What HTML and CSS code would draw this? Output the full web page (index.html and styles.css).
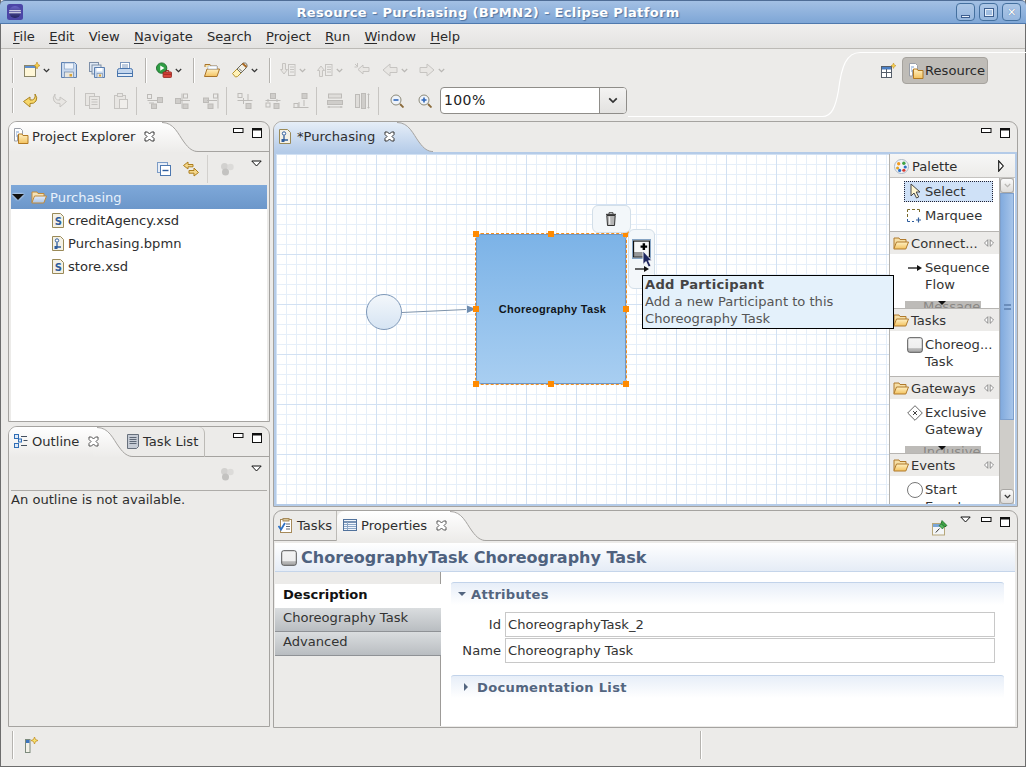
FILE: index.html
```html
<!DOCTYPE html>
<html lang="en">
<head>
<meta charset="utf-8">
<title>Resource - Purchasing (BPMN2) - Eclipse Platform</title>
<link rel="stylesheet" href="styles.css">
</head>
<body>
<svg class="defs" width="0" height="0" aria-hidden="true">
  <defs>
    <linearGradient id="gFolder" x1="0" y1="0" x2="0" y2="1"><stop offset="0" stop-color="#fff1c4"/><stop offset="1" stop-color="#f3c25f"/></linearGradient>
    <linearGradient id="gBlue" x1="0" y1="0" x2="0" y2="1"><stop offset="0" stop-color="#e6eefa"/><stop offset="1" stop-color="#a9c4e6"/></linearGradient>
    <linearGradient id="gGlobe" x1="0" y1="0" x2="0" y2="1"><stop offset="0" stop-color="#6a66c8"/><stop offset="1" stop-color="#24235f"/></linearGradient>
    <symbol id="close" viewBox="0 0 11 11"><path d="M1 1h2.500l2 2 2-2H10v2.500l-2 2 2 2V10H7.500l-2-2-2 2H1V7.500l2-2-2-2z" fill="#fff" stroke="#333" stroke-width="1"/></symbol>
    <symbol id="closeg" viewBox="0 0 11 11"><path d="M1 1h2.500l2 2 2-2H10v2.500l-2 2 2 2V10H7.500l-2-2-2 2H1V7.500l2-2-2-2z" fill="#fff" stroke="#555" stroke-width="1"/></symbol>
    <symbol id="min" viewBox="0 0 11 6"><rect x=".5" y=".5" width="9.500" height="4" fill="#fff" stroke="#111"/></symbol>
    <symbol id="max" viewBox="0 0 10 10"><rect x=".5" y=".5" width="9" height="9" fill="#fff" stroke="#111"/><path d="M0 1.500h10" stroke="#111" stroke-width="2"/></symbol>
    <symbol id="menu" viewBox="0 0 11 7"><path d="M.8 1h9.400L5.500 6z" fill="#fff" stroke="#111"/></symbol>
    <symbol id="parrow" viewBox="0 0 6 12"><path d="M.7.800L5.300 6 .7 11.200z" fill="#fff" stroke="#111" stroke-width="1.100"/></symbol>
    <symbol id="chev" viewBox="0 0 7 5"><path d="M.8 1l2.700 2.700L6.200 1" fill="none" stroke="#333" stroke-width="1.200"/></symbol>
    <symbol id="chevg" viewBox="0 0 7 5"><path d="M.8 1l2.700 2.700L6.200 1" fill="none" stroke="#b9b7b4" stroke-width="1.200"/></symbol>
    <symbol id="new" viewBox="0 0 16 16"><rect x=".5" y="3.500" width="11" height="11" fill="#fff7d8" stroke="#8a8568"/><rect x="1" y="4" width="10" height="2" fill="#5f8fd0"/><path d="M13 0l1 2.500L16 3.500l-2 1-1 2.500-1-2.500-2-1 2-1z" fill="#f7d34c" stroke="#c08a1e" stroke-width=".6"/></symbol>
    <symbol id="save" viewBox="0 0 16 16"><path d="M.5.500h13l2 2v13H.5z" fill="#c9d9ee" stroke="#5b7fb0"/><rect x="3.500" y="1" width="9" height="6" fill="#eef3fa" stroke="#8aa5c8" stroke-width=".7"/><rect x="3.500" y="10" width="9" height="5.500" fill="#e9e6de" stroke="#6b87ad" stroke-width=".7"/><rect x="8.500" y="12" width="2.500" height="2.500" fill="#d9a437"/></symbol>
    <symbol id="saveall" viewBox="0 0 16 16"><rect x=".5" y=".5" width="9" height="9" fill="#dfe8f4" stroke="#7d8fa8"/><rect x="3" y="3" width="9" height="9" fill="#dfe8f4" stroke="#7d8fa8"/><path d="M5.500 5.500h10v10h-10z" fill="#c9d9ee" stroke="#5b7fb0"/><rect x="7.500" y="6" width="6" height="3.500" fill="#fff"/><rect x="8" y="11.500" width="5.500" height="4" fill="#e9e6de" stroke="#6b87ad" stroke-width=".6"/><rect x="10" y="12.500" width="2" height="2" fill="#d9a437"/></symbol>
    <symbol id="print" viewBox="0 0 16 16"><rect x="3.500" y=".5" width="9" height="8" fill="#fff" stroke="#7d98bd"/><path d="M5 3h6M5 5h6" stroke="#7d98bd"/><path d="M.5 8.500q0-2 2-2h11q2 0 2 2v5h-15z" fill="#c3d6ee" stroke="#4a76ad"/><rect x=".5" y="11.500" width="15" height="3" fill="#e4edf8" stroke="#4a76ad"/></symbol>
    <symbol id="run" viewBox="0 0 17 16"><circle cx="6" cy="6" r="5.500" fill="#2f9e44" stroke="#1d6d2c"/><path d="M4.500 3.200l4.500 2.800-4.500 2.800z" fill="#fff"/><rect x="7.500" y="10" width="9" height="6" rx="1" fill="#d8453b" stroke="#8b1f1a" stroke-width=".8"/><path d="M10.500 10V8.500h3V10" fill="none" stroke="#8b1f1a"/><path d="M8 12.500h8" stroke="#8b1f1a" stroke-width=".8"/></symbol>
    <symbol id="open" viewBox="0 0 16 16"><path d="M1 5V2.500h5l1 1.500h6v3" fill="#f9e3a6" stroke="#a8732a"/><path d="M.5 14.500L3 7h12.500l-2.500 7.500z" fill="url(#gFolder)" stroke="#a8732a"/><path d="M4 4h9v3H4z" fill="#fff" stroke="#9fb6d3" stroke-width=".6"/></symbol>
    <symbol id="wand" viewBox="0 0 16 16"><path d="M.5 11.500L5 7l4 4-3.500 3.500-2 .5z" fill="#fff2b8" stroke="#b8962f"/><path d="M5 7l6-6q3-.5 4 1.500.5 2-1 3.500L9 11z" fill="#f2f0e6" stroke="#6c6a5e"/><path d="M10.500 1.500l4 3.500" stroke="#a9661f" stroke-width="1.800"/><path d="M7 6.500l3 3" stroke="#6c6a5e"/></symbol>
    <symbol id="navd" viewBox="0 0 16 16"><g fill="none" stroke="#c6c4c1"><rect x="8.500" y="2.500" width="6.500" height="11"/><path d="M10 5h4M10 7.500h4M10 10h4"/><path d="M2.500 1.500h3v6h2L4 12 .5 7.500h2z" fill="#e8e6e3"/></g></symbol>
    <symbol id="navu" viewBox="0 0 16 16"><g fill="none" stroke="#c6c4c1"><rect x="8.500" y="2.500" width="6.500" height="11"/><path d="M10 5h4M10 7.500h4M10 10h4"/><path d="M2.500 14.500h3v-6h2L4 4 .5 8.500h2z" fill="#e8e6e3"/></g></symbol>
    <symbol id="last" viewBox="0 0 16 16"><g stroke="#c6c4c1" fill="#e8e6e3"><path d="M15 5.500H9V3L4 7.500 9 12V9.500h6z"/><path d="M1 2l3 3M3.500 1v3M.5 5h3" fill="none"/></g></symbol>
    <symbol id="back" viewBox="0 0 16 16"><path d="M15 5.500H8V2L1 8l7 6v-3.500h7z" fill="#e8e6e3" stroke="#c6c4c1"/></symbol>
    <symbol id="fwd" viewBox="0 0 16 16"><path d="M1 5.500h7V2l7 6-7 6v-3.500H1z" fill="#e8e6e3" stroke="#c6c4c1"/></symbol>
    <symbol id="undo" viewBox="0 0 16 16"><path d="M12 1q3 4 1 7-2 3-6 2.500V14L.5 8.500 7 4v3q3 .5 4.500-1.500 1-2 .5-4.500z" fill="#f7d76a" stroke="#a98322"/></symbol>
    <symbol id="redo" viewBox="0 0 16 16"><path d="M4 1q-3 4-1 7 2 3 6 2.500V14l6.500-5.500L9 4v3Q6 7.500 4.500 5.500q-1-2-.5-4.500z" fill="#e8e6e3" stroke="#c6c4c1"/></symbol>
    <symbol id="copy" viewBox="0 0 16 16"><g fill="#e8e6e3" stroke="#c6c4c1"><rect x=".5" y=".5" width="9" height="12"/><rect x="4.500" y="3.500" width="10" height="12"/><path d="M6.500 6.500h6M6.500 9h6M6.500 11.500h6" fill="none"/></g></symbol>
    <symbol id="paste" viewBox="0 0 16 16"><g fill="#e8e6e3" stroke="#c6c4c1"><rect x="1.500" y="2.500" width="11" height="13"/><rect x="4.500" y=".5" width="5" height="3"/><rect x="6.500" y="6.500" width="8" height="9" fill="#f0eeeb"/></g></symbol>
    <symbol id="al1" viewBox="0 0 16 16"><g fill="#cfcdca" stroke="#bdbbb8"><rect x=".5" y="1.500" width="4" height="4" fill="none"/><rect x="10.500" y="4.500" width="5" height="5"/><rect x="4.500" y="11" width="5" height="4.500"/><path d="M.5 7.500h10M2 10h5" fill="none"/></g></symbol>
    <symbol id="al2" viewBox="0 0 16 16"><g fill="#cfcdca" stroke="#bdbbb8"><rect x=".5" y="5.500" width="5" height="5"/><rect x="8.500" y="1" width="4" height="4" fill="none"/><rect x="8" y="11" width="5" height="4.500"/><path d="M7 .5v15M5 7.500h10" fill="none"/></g></symbol>
    <symbol id="al3" viewBox="0 0 16 16"><g fill="#cfcdca" stroke="#bdbbb8"><rect x=".5" y="5" width="5" height="4.500"/><rect x="10.500" y="1" width="4" height="4" fill="none"/><rect x="5" y="11" width="5" height="4.500"/><path d="M15 .5v15M4 7.500h10" fill="none"/></g></symbol>
    <symbol id="al4" viewBox="0 0 16 16"><g fill="#cfcdca" stroke="#bdbbb8"><rect x="1" y=".5" width="4" height="4" fill="none"/><rect x="9" y="10.500" width="5" height="5"/><path d="M.5 7.500h15M6.500 5v6M11 1v6" fill="none"/></g></symbol>
    <symbol id="al5" viewBox="0 0 16 16"><g fill="#cfcdca" stroke="#bdbbb8"><rect x="5.500" y=".5" width="5" height="5"/><rect x="1" y="10" width="4" height="4" fill="none"/><rect x="9" y="10.500" width="5" height="5"/><path d="M.5 7.500h15M3 6v3M12 6v3" fill="none"/></g></symbol>
    <symbol id="al6" viewBox="0 0 16 16"><g fill="#cfcdca" stroke="#bdbbb8"><rect x="9" y=".5" width="5" height="5"/><rect x="1" y="10.500" width="4" height="4" fill="none"/><path d="M.5 14.500h15M6 9v5M11 7v6" fill="none"/></g></symbol>
    <symbol id="sz1" viewBox="0 0 16 16"><g fill="#dfddda" stroke="#bdbbb8"><rect x="1.500" y="1" width="13" height="4"/><rect x=".5" y="7.500" width="15" height="4" fill="#cfcdca"/><path d="M.5 14h15M2 13v2M14 13v2" fill="none"/></g></symbol>
    <symbol id="sz2" viewBox="0 0 16 16"><g fill="#dfddda" stroke="#bdbbb8"><rect x=".5" y="1.500" width="4" height="13"/><rect x="6.500" y=".5" width="4" height="15" fill="#cfcdca"/><path d="M13.500.5v15M12.500 1.500h2M12.500 14.500h2" fill="none"/></g></symbol>
    <symbol id="zo" viewBox="0 0 14 14"><circle cx="6" cy="6" r="5" fill="#eef3fa" stroke="#8d8a78"/><path d="M3.500 6h5" stroke="#2f66b8" stroke-width="1.600"/><path d="M10 10l3.500 3.500" stroke="#8a6a3a" stroke-width="1.800"/></symbol>
    <symbol id="zi" viewBox="0 0 14 14"><circle cx="6" cy="6" r="5" fill="#eef3fa" stroke="#8d8a78"/><path d="M3.500 6h5M6 3.500v5" stroke="#2f66b8" stroke-width="1.600"/><path d="M10 10l3.500 3.500" stroke="#8a6a3a" stroke-width="1.800"/></symbol>
    <symbol id="persp" viewBox="0 0 15 15"><rect x=".5" y="3.500" width="10" height="11" fill="#fff" stroke="#555e6a"/><rect x="1" y="4" width="9" height="2.500" fill="#4b7fc4"/><path d="M.5 9.500h10M5.500 6v8" stroke="#555e6a"/><path d="M12.500 0l.8 1.900 1.700.8-1.700.8-.8 1.900-.8-1.900-1.700-.8 1.700-.8z" fill="#f7d34c" stroke="#c08a1e" stroke-width=".5"/></symbol>
    <symbol id="res" viewBox="0 0 16 16"><path d="M1.500.500h6l2 2V7h-5v6h-3z" fill="#fff" stroke="#9a9fa8"/><path d="M3 4h3M3 6h1M3 8h1" stroke="#7b9fd0"/><path d="M5.500 8V6h3.500l1 1.500h5V15.500H5.500z" fill="url(#gFolder)" stroke="#b37a22"/></symbol>
    <symbol id="collapse" viewBox="0 0 14 14"><rect x=".5" y=".5" width="10" height="10" fill="#e8eef7" stroke="#7c9cc6"/><rect x="3.500" y="3.500" width="10" height="10" fill="#fff" stroke="#4d78b0"/><path d="M5.500 8.500h6" stroke="#2f5d9c" stroke-width="1.400"/></symbol>
    <symbol id="link" viewBox="0 0 16 16"><g fill="#f5d78b" stroke="#ac7f1f"><path d="M10 3.500H5V1L.5 4.500 5 8V5.800h5z"/><path d="M6 9.500h5V7l4.500 4.500L11 15v-2.800H6z"/></g></symbol>
    <symbol id="dots" viewBox="0 0 14 14"><g fill="#d2d1cf"><circle cx="4.500" cy="4.500" r="3.500"/><circle cx="10.500" cy="5" r="3.200" fill="#dcdbd9"/><circle cx="5.500" cy="10" r="3.500" fill="#c3c2c0"/></g></symbol>
    <symbol id="fold" viewBox="0 0 16 16"><path d="M1 13V3h5l1 1.500h6V7" fill="#f6dfa6" stroke="#b07a2c"/><path d="M.8 14L3.500 7H15.500l-2.700 7z" fill="url(#gFolder)" stroke="#b07a2c"/></symbol>
    <symbol id="foldb" viewBox="0 0 16 16"><path d="M1 13V3h5l1 1.500h6V7" fill="#f4e3b9" stroke="#c08a3a"/><path d="M.8 14L3.500 7H15.500l-2.700 7z" fill="url(#gBlue)" stroke="#c08a3a"/></symbol>
    <symbol id="xsd" viewBox="0 0 12 15"><path d="M.5.500h8l3 3v11H.5z" fill="#f4f1e6" stroke="#9a8a58"/><text x="2.800" y="12" class="sv-s">S</text></symbol>
    <symbol id="bpmn" viewBox="0 0 12 15"><path d="M.5.500h8l3 3v11H.5z" fill="#f4f1e6" stroke="#9a8a58"/><circle cx="5" cy="4.500" r="1.700" fill="#fff" stroke="#2f5d9c"/><path d="M5 6.500V11h4" stroke="#2f5d9c" fill="none" stroke-width="1.300"/><rect x="2.500" y="10" width="3" height="3" fill="#2f5d9c"/></symbol>
    <symbol id="outl" viewBox="0 0 14 14"><g fill="#dfeaf8" stroke="#2f6db5"><rect x=".5" y=".5" width="4" height="4"/><rect x="4.500" y="5" width="3" height="3"/><rect x=".5" y="9.500" width="4" height="4"/></g><path d="M7 2.500h6M9.500 6.500h4M7 11.500h6" stroke="#444f5e"/></symbol>
    <symbol id="tlist" viewBox="0 0 12 15"><path d="M.5.500h11v12l-2 2H.5z" fill="#c6ccd5" stroke="#67707c"/><path d="M2.500 3.500h7M2.500 5.500h7M2.500 7.500h7M2.500 9.500h7" stroke="#5e6876"/></symbol>
    <symbol id="tasks" viewBox="0 0 15 15"><rect x="2.500" y="1.500" width="11" height="13" fill="#fff" stroke="#a68a5a"/><rect x="5" y=".5" width="6" height="2.500" fill="#d8c69a" stroke="#a68a5a"/><path d="M8 6h4M8 8.500h4M8 11h4" stroke="#5e6876"/><path d="M.5 8l2.500 3.500L7 5" fill="none" stroke="#2f72c4" stroke-width="1.800"/></symbol>
    <symbol id="props" viewBox="0 0 14 12"><rect x=".5" y=".5" width="13" height="11" fill="#f2f6fb" stroke="#51729c"/><path d="M.5 3h13" stroke="#51729c" stroke-width="1.500"/><path d="M1 5.500h12M1 7.500h12M1 9.500h12M4.500 3v8" stroke="#8da7c7"/></symbol>
    <symbol id="pin" viewBox="0 0 16 16"><rect x=".5" y="3.500" width="12" height="11.500" fill="#f4f6f8" stroke="#b7a77a"/><rect x="1" y="4" width="11" height="3" fill="#7aa5d8"/><path d="M9 2l5 5M7.500 8.500L3.800 12.500" stroke="#333"/><path d="M10 .5l5 5-2.500 1.500L9 3.500z" fill="#3da243" stroke="#1e6f28" stroke-width=".7"/><path d="M7 5.500l3.500 3.500 1.500-2.500-2.500-2.500z" fill="#58b95c" stroke="#1e6f28" stroke-width=".7"/></symbol>
    <symbol id="ctask" viewBox="0 0 16 16"><defs><linearGradient id="gTask" x1="0" y1="0" x2="0" y2="1"><stop offset="0" stop-color="#f4f4f4"/><stop offset=".7" stop-color="#eee"/><stop offset=".75" stop-color="#b9b9b9"/><stop offset="1" stop-color="#a8a8a8"/></linearGradient></defs><rect x=".7" y=".7" width="14.600" height="14.600" rx="2" fill="url(#gTask)" stroke="#555"/></symbol>
    <symbol id="pal" viewBox="0 0 16 16"><circle cx="8" cy="8" r="7.500" fill="#f2f4f7" stroke="#a9b4c2"/><circle cx="5" cy="5" r="1.800" fill="#f29a1e"/><circle cx="10.500" cy="4.500" r="1.800" fill="#3da243"/><circle cx="3.800" cy="9.500" r="1.600" fill="#e4a31e"/><circle cx="12" cy="8.500" r="1.700" fill="#2f72c4"/><circle cx="6" cy="12.200" r="1.700" fill="#2f72c4"/><circle cx="10.500" cy="12" r="1.700" fill="#d6392f"/></symbol>
    <symbol id="select" viewBox="0 0 12 16"><path d="M1 1v12l3-3 2.500 5 2.200-1-2.500-5H10z" fill="#fff6cf" stroke="#444"/></symbol>
    <symbol id="marq" viewBox="0 0 14 14"><path d="M.5 3V.5H3M5 .5h3M10 .5h2.500V3M.5 5v3" fill="none" stroke="#7a6a2a"/><path d="M.5 10v2.500H3M5 12.500h2" fill="none" stroke="#2f5d9c"/><path d="M9 11h5M11.500 8.500v5" stroke="#2f5d9c" stroke-width="1.200"/></symbol>
    <symbol id="flow" viewBox="0 0 14 6"><path d="M0 3h10" stroke="#333" stroke-width="1.500"/><path d="M9 0l5 3-5 3z" fill="#111"/></symbol>
    <symbol id="fly" viewBox="0 0 10 10"><path d="M.5 5l3.300-3.300v6.600zM9.500 5L6.200 1.700v6.600z" fill="#fff" stroke="#777" stroke-width=".8"/></symbol>
    <symbol id="gate" viewBox="0 0 16 16"><path d="M8 .7L15.300 8 8 15.300.7 8z" fill="#fff" stroke="#666"/><path d="M6 6l4 4M10 6l-4 4" stroke="#444"/></symbol>
    <symbol id="start" viewBox="0 0 16 16"><circle cx="8" cy="8" r="7.500" fill="#fff" stroke="#777"/></symbol>
    <symbol id="trash" viewBox="0 0 12 14"><path d="M1 2.500h10" stroke="#444" stroke-width="1.400"/><path d="M4 2V.7h4V2" fill="none" stroke="#444"/><path d="M1.800 3.500h8.400l-.7 10h-7z" fill="#b5b5b5" stroke="#333"/><path d="M4.500 4.500l.3 8" stroke="#eee" stroke-width="1.200"/></symbol>
    <symbol id="addp" viewBox="0 0 18 18"><rect x=".6" y=".6" width="16.800" height="16.800" fill="#f7f7f7" stroke="#111" stroke-width="1.200"/><rect x="1" y="13" width="10" height="4" fill="#999" stroke="#444" stroke-width=".5"/><path d="M11.500 3v7M8 6.500h7" stroke="#000" stroke-width="2.600"/></symbol>
    <symbol id="cursor" viewBox="0 0 11 18"><path d="M1 1v13.500l3-3 2.500 5.500 2.500-1-2.500-5.300H10z" fill="#20285f" stroke="#fff" stroke-width=".8"/></symbol>
    <symbol id="newv" viewBox="0 0 14 16"><rect x=".5" y="2.500" width="4.500" height="13" fill="#f3f1e8" stroke="#7c8a7c"/><rect x="1" y="3" width="3.500" height="3" fill="#3d74bd"/><path d="M9.500 0l1 2.500 2.500 1-2.500 1-1 2.500-1-2.500-2.500-1 2.500-1z" fill="#f7e36b" stroke="#c08a1e" stroke-width=".7"/></symbol>
    <symbol id="logo" viewBox="0 0 16 16"><rect width="16" height="16" rx="2.500" fill="#4b46a6"/><circle cx="8" cy="8" r="6" fill="url(#gGlobe)"/><path d="M2.200 6.800h11.600M2 8.700h12" stroke="#f2f2fa" stroke-width="1.100"/></symbol>
  </defs>
</svg>
<div class="window">
  <header class="titlebar">
    <svg class="logo"><use href="#logo"/></svg>
    <div class="title">Resource - Purchasing (BPMN2) - Eclipse Platform</div>
    <div class="winbtns">
      <span class="winbtn"><i class="w-min"></i></span>
      <span class="winbtn"><i class="w-max"></i></span>
      <span class="winbtn w-x">✕</span>
    </div>
  </header>
  <nav class="menubar">
    <span><u>F</u>ile</span><span><u>E</u>dit</span><span>View</span><span><u>N</u>avigate</span><span>Se<u>a</u>rch</span><span><u>P</u>roject</span><span><u>R</u>un</span><span><u>W</u>indow</span><span><u>H</u>elp</span>
  </nav>
  <section class="toolarea">
    <svg class="curve" viewBox="0 0 399 67" preserveAspectRatio="none"><path d="M0 65.500H195c9 0 13-9 16-26C214 15 219 1.500 233 1.500H399" fill="none" stroke="#fff" stroke-width="1.200"/></svg>
    <div class="toolrows">
      <div class="toolrow">
        <i class="handle"></i>
        <span class="ti wide first"><svg class="ic"><use href="#new"/></svg><svg class="ch"><use href="#chev"/></svg></span>
        <span class="ti"><svg class="ic"><use href="#save"/></svg></span>
        <span class="ti"><svg class="ic"><use href="#saveall"/></svg></span>
        <span class="ti"><svg class="ic"><use href="#print"/></svg></span>
        <i class="handle"></i>
        <span class="ti wide"><svg class="ic"><use href="#run"/></svg><svg class="ch"><use href="#chev"/></svg></span>
        <i class="handle"></i>
        <span class="ti"><svg class="ic"><use href="#open"/></svg></span>
        <span class="ti wide"><svg class="ic"><use href="#wand"/></svg><svg class="ch"><use href="#chev"/></svg></span>
        <i class="handle"></i>
        <span class="ti wide"><svg class="ic"><use href="#navd"/></svg><svg class="ch"><use href="#chevg"/></svg></span>
        <span class="ti wide"><svg class="ic"><use href="#navu"/></svg><svg class="ch"><use href="#chevg"/></svg></span>
        <span class="ti"><svg class="ic"><use href="#last"/></svg></span>
        <span class="ti wide"><svg class="ic"><use href="#back"/></svg><svg class="ch"><use href="#chevg"/></svg></span>
        <span class="ti wide"><svg class="ic"><use href="#fwd"/></svg><svg class="ch"><use href="#chevg"/></svg></span>
      </div>
      <div class="toolrow second">
        <i class="handle"></i>
        <span class="ti"><svg class="ic"><use href="#undo"/></svg></span>
        <span class="ti"><svg class="ic"><use href="#redo"/></svg></span>
        <i class="sep"></i>
        <span class="ti"><svg class="ic"><use href="#copy"/></svg></span>
        <span class="ti"><svg class="ic"><use href="#paste"/></svg></span>
        <i class="sep"></i>
        <span class="ti"><svg class="ic"><use href="#al1"/></svg></span>
        <span class="ti"><svg class="ic"><use href="#al2"/></svg></span>
        <span class="ti"><svg class="ic"><use href="#al3"/></svg></span>
        <i class="sep"></i>
        <span class="ti"><svg class="ic"><use href="#al4"/></svg></span>
        <span class="ti"><svg class="ic"><use href="#al5"/></svg></span>
        <span class="ti"><svg class="ic"><use href="#al6"/></svg></span>
        <i class="sep"></i>
        <span class="ti"><svg class="ic"><use href="#sz1"/></svg></span>
        <span class="ti"><svg class="ic"><use href="#sz2"/></svg></span>
        <i class="sep wider"></i>
        <span class="ti"><svg class="ic small"><use href="#zo"/></svg></span>
        <span class="ti"><svg class="ic small"><use href="#zi"/></svg></span>
        <div class="combo"><span class="combo-text">100%</span><span class="combo-btn"><svg class="combo-ch"><use href="#chev"/></svg></span></div>
      </div>
    </div>
    <div class="persp">
      <svg class="ic persp-new"><use href="#persp"/></svg>
      <div class="persp-btn"><svg class="ic"><use href="#res"/></svg><span>Resource</span></div>
    </div>
  </section>
  <main class="workbench">
    <div class="col-left">
      <section class="panel explorer">
        <div class="tabhead">
          <div class="tab active"><svg class="ic tabic"><use href="#res"/></svg><span>Project Explorer</span><svg class="x"><use href="#close"/></svg><svg class="tabcurve" viewBox="0 0 40 30" preserveAspectRatio="none"><path d="M0 0h4C16 0 20 12 26 20c5 7 9 9.500 14 9.500V31H0z" fill="url(#gTab)"/><path d="M4 .5C16 .5 20 12 26 20c5 7 9 9.500 14 9.500" fill="none" stroke="#a5a3a0"/></svg></div>
          <div class="headbtns"><svg class="b-min"><use href="#min"/></svg><svg class="b-max"><use href="#max"/></svg></div>
        </div>
        <div class="viewbar">
          <svg class="vb-ic"><use href="#collapse"/></svg>
          <svg class="ic vb-link"><use href="#link"/></svg>
          <i class="vsep"></i>
          <svg class="vb-ic dots"><use href="#dots"/></svg>
          <svg class="vmenu"><use href="#menu"/></svg>
        </div>
        <div class="tree">
          <div class="row sel"><i class="twist"></i><svg class="ic"><use href="#foldb"/></svg><span>Purchasing</span></div>
          <div class="row"><svg class="fileic"><use href="#xsd"/></svg><span>creditAgency.xsd</span></div>
          <div class="row"><svg class="fileic"><use href="#bpmn"/></svg><span>Purchasing.bpmn</span></div>
          <div class="row"><svg class="fileic"><use href="#xsd"/></svg><span>store.xsd</span></div>
        </div>
      </section>
      <section class="panel outline">
        <div class="tabhead">
          <div class="tab active short"><svg class="ic tabic2"><use href="#outl"/></svg><span>Outline</span><svg class="x"><use href="#closeg"/></svg><svg class="tabcurve" viewBox="0 0 40 30" preserveAspectRatio="none"><path d="M0 0h4C16 0 20 12 26 20c5 7 9 9.500 14 9.500V31H0z" fill="url(#gTab)"/><path d="M4 .5C16 .5 20 12 26 20c5 7 9 9.500 14 9.500" fill="none" stroke="#a5a3a0"/></svg></div>
          <div class="tab plain"><svg class="tabic3"><use href="#tlist"/></svg><span>Task List</span></div>
          <div class="headbtns"><svg class="b-min"><use href="#min"/></svg><svg class="b-max"><use href="#max"/></svg></div>
        </div>
        <div class="viewbar ol">
          <svg class="vb-ic dots"><use href="#dots"/></svg>
          <svg class="vmenu"><use href="#menu"/></svg>
        </div>
        <div class="outline-body">An outline is not available.</div>
      </section>
    </div>
    <div class="col-right">
      <section class="panel editor">
        <div class="tabhead edtab">
          <div class="tab active blue"><svg class="fileic2"><use href="#bpmn"/></svg><span>*Purchasing</span><svg class="x"><use href="#close"/></svg><svg class="tabcurve" viewBox="0 0 40 30" preserveAspectRatio="none"><path d="M0 0h4C16 0 20 12 26 20c5 7 9 9.500 14 9.500V31H0z" fill="url(#gTabB)"/><path d="M4 .5C16 .5 20 12 26 20c5 7 9 9.500 14 9.500" fill="none" stroke="#a5a3a0"/></svg></div>
          <div class="headbtns"><svg class="b-min"><use href="#min"/></svg><svg class="b-max"><use href="#max"/></svg></div>
        </div>
        <div class="edbody">
          <div class="canvas">
            <svg class="conn" viewBox="0 0 613 350"><path d="M126 158.500L190 155.500" stroke="#7e93aa" stroke-width="1.200" fill="none"/><path d="M200 155l-9-3.500v7.500z" fill="#6f8db0"/></svg>
            <div class="start-ev"></div>
            <div class="shape">
              <span>Choreography Task</span>
            </div>
            <i class="h tl"></i><i class="h tm"></i><i class="h tr"></i><i class="h ml"></i><i class="h mr"></i><i class="h bl"></i><i class="h bm"></i><i class="h br"></i>
            <div class="pad2">
              <span class="padbtn"><svg class="addp"><use href="#addp"/></svg></span>
              <svg class="padflow"><use href="#flow"/></svg>
            </div>
            <div class="pad1"><svg class="trash"><use href="#trash"/></svg></div>
            <svg class="cursor"><use href="#cursor"/></svg>
            <div class="tooltip"><b>Add Participant</b><span>Add a new Participant to this</span><span>Choreography Task</span></div>
          </div>
          <aside class="palette">
            <div class="pal-head"><svg class="pal-ic"><use href="#pal"/></svg><span>Palette</span><svg class="pal-arrow"><use href="#parrow"/></svg></div>
            <div class="pal-main">
              <div class="pal-list">
                <div class="pal-group tools">
                  <div class="pal-item seltool"><svg class="pi-sel"><use href="#select"/></svg><span>Select</span></div>
                  <div class="pal-item"><svg class="pi-mq"><use href="#marq"/></svg><span>Marquee</span></div>
                </div>
                <div class="pal-sec s1">
                  <div class="pal-dr"><svg class="ic"><use href="#fold"/></svg><span>Connect...</span><svg class="fly"><use href="#fly"/></svg></div>
                  <div class="pal-item two"><svg class="pi-flow"><use href="#flow"/></svg><span>Sequence<br>Flow</span></div>
                  <div class="peek"><span>Message</span><i></i></div>
                </div>
                <div class="pal-sec s2">
                  <div class="pal-dr"><svg class="ic"><use href="#fold"/></svg><span>Tasks</span><svg class="fly"><use href="#fly"/></svg></div>
                  <div class="pal-item two"><svg class="ic pi"><use href="#ctask"/></svg><span>Choreog...<br>Task</span></div>
                </div>
                <div class="pal-sec s3">
                  <div class="pal-dr"><svg class="ic"><use href="#fold"/></svg><span>Gateways</span><svg class="fly"><use href="#fly"/></svg></div>
                  <div class="pal-item two"><svg class="ic pi"><use href="#gate"/></svg><span>Exclusive<br>Gateway</span></div>
                  <div class="peek"><span>Inclusive</span><i></i></div>
                </div>
                <div class="pal-sec s4">
                  <div class="pal-dr"><svg class="ic"><use href="#fold"/></svg><span>Events</span><svg class="fly"><use href="#fly"/></svg></div>
                  <div class="pal-item two"><svg class="ic pi"><use href="#start"/></svg><span>Start<br>Event</span></div>
                </div>
              </div>
              <div class="scroll">
                <span class="sb-btn up"><svg class="combo-ch"><use href="#chevg"/></svg></span>
                <div class="sb-thumb"><i></i></div>
                <div class="sb-track"></div>
                <span class="sb-btn"><svg class="combo-ch"><use href="#chev"/></svg></span>
              </div>
            </div>
          </aside>
        </div>
      </section>
      <section class="panel props">
        <div class="tabhead">
          <div class="tab plain first"><svg class="tabic4"><use href="#tasks"/></svg><span>Tasks</span></div>
          <div class="tab active prop"><svg class="tabic5"><use href="#props"/></svg><span>Properties</span><svg class="x"><use href="#closeg"/></svg><svg class="tabcurve" viewBox="0 0 40 30" preserveAspectRatio="none"><path d="M0 0h4C16 0 20 12 26 20c5 7 9 9.500 14 9.500V31H0z" fill="url(#gTab)"/><path d="M4 .5C16 .5 20 12 26 20c5 7 9 9.500 14 9.500" fill="none" stroke="#a5a3a0"/></svg></div>
          <div class="headbtns wide"><svg class="ic pinic"><use href="#pin"/></svg><svg class="vmenu"><use href="#menu"/></svg><svg class="b-min"><use href="#min"/></svg><svg class="b-max"><use href="#max"/></svg></div>
        </div>
        <div class="propbody">
          <div class="formhead"><svg class="ic"><use href="#ctask"/></svg><span>ChoreographyTask Choreography Task</span></div>
          <div class="split">
            <div class="sections">
              <div class="stab on">Description</div>
              <div class="stab">Choreography Task</div>
              <div class="stab">Advanced</div>
            </div>
            <div class="formarea">
              <div class="fsec"><i class="tw-down"></i><span>Attributes</span></div>
              <div class="frow"><label>Id</label><div class="field">ChoreographyTask_2</div></div>
              <div class="frow"><label>Name</label><div class="field">Choreography Task</div></div>
              <div class="fsec doc"><i class="tw-right"></i><span>Documentation List</span></div>
            </div>
          </div>
        </div>
      </section>
    </div>
  </main>
  <footer class="status">
    <i class="handle"></i><svg class="ic stat-ic"><use href="#newv"/></svg><i class="handle far"></i>
  </footer>
</div>
<svg class="defs" width="0" height="0" aria-hidden="true"><defs>
  <linearGradient id="gTab" x1="0" y1="0" x2="0" y2="1"><stop offset="0" stop-color="#ffffff"/><stop offset="1" stop-color="#ecebe9"/></linearGradient>
  <linearGradient id="gTabB" x1="0" y1="0" x2="0" y2="1"><stop offset="0" stop-color="#e6eef8"/><stop offset="1" stop-color="#b4cbe8"/></linearGradient>
</defs></svg>
</body>
</html>
```
FILE: styles.css
```css
* { box-sizing: border-box; }
html, body { margin: 0; padding: 0; }
body { width: 1026px; height: 767px; overflow: hidden; font: 13.1px/17px "DejaVu Sans", sans-serif; color: #2e2e2e; background: #ecebe9; }
.defs { position: absolute; }
svg { display: block; flex: none; }
i { display: block; flex: none; }
.sv-s { font: bold 10px "DejaVu Sans", sans-serif; fill: #2f5d9c; }

.window { width: 1026px; height: 767px; display: flex; flex-direction: column; background: #ecebe9; border: 1px solid #6d6d6d; border-top: 0; }

/* title bar */
.titlebar { height: 24px; flex: none; margin: 0 -1px; display: flex; align-items: center; position: relative; border-radius: 5px 5px 0 0; background: linear-gradient(#a3c0e4, #7ea6d6); border-bottom: 1px solid #4f79ad; border-top: 1px solid #4f6d96; }
.logo { width: 16px; height: 16px; margin-left: 7px; }
.title { flex: 1; text-align: center; font-weight: bold; font-size: 13px; letter-spacing: .35px; color: #fff; text-shadow: 1px 1px 1px #50739f; padding-right: 3px; }
.winbtns { display: flex; gap: 4px; margin-right: 5px; }
.winbtn { width: 19px; height: 18px; border: 1px solid #44709f; border-radius: 4px; background: rgba(255,255,255,.16); display: flex; align-items: center; justify-content: center; color: #fff; font-size: 11px; line-height: 1; position: relative; }
.w-min { width: 9px; height: 3px; border: 1px solid #3d5f8f; background: #e7eff9; margin-top: 8px; }
.w-max { width: 10px; height: 9px; border: 1px solid #3d5f8f; outline: 1px solid #e7eff9; outline-offset: -2px; }
.w-x { font-weight: bold; text-shadow: 0 0 1px #3d5f8f; }

/* menu */
.menubar { height: 25px; flex: none; display: flex; align-items: center; padding: 0 0 0 12px; gap: 14.2px; background: linear-gradient(#f0efee, #e4e3e1); border-bottom: 1px solid #bcbab6; color: #2a2a2a; }
.menubar u { text-underline-offset: 2px; }

/* toolbars */
.toolarea { height: 71px; flex: none; display: flex; position: relative; }
.curve { position: absolute; left: 627px; top: 2px; width: 398px; height: 67px; }
.toolrows { flex: 1; display: flex; flex-direction: column; padding-top: 8px; }
.toolrow { height: 26px; display: flex; align-items: center; padding-left: 11px; }
.toolrow.second { height: 27px; margin-top: 4px; }
.handle { width: 2px; height: 25px; margin: 0 3px 0 6px; border-left: 1px solid #b5b3af; border-right: 1px solid #fff; }
.toolrow .handle:first-child { margin-left: 0; }
.ti { width: 28px; height: 24px; padding-left: 6px; display: flex; align-items: center; position: relative; }
.ti.wide { width: 37px; }
.ti.wide.first { margin-left: 1px; margin-right: 0; }
.ic { width: 16px; height: 16px; }
.ic.small { width: 14px; height: 14px; }
.ch { width: 7px; height: 5px; margin-left: 3px; margin-top: 1px; }
.sep { width: 1px; height: 28px; background: #c7c5c2; margin: 0 4px 0 1px; }
.sep.wider { margin-right: 5px; }
.combo { width: 187px; height: 27px; margin-left: 0; display: flex; border: 1px solid #8f8d89; border-radius: 4px; background: #fff; overflow: hidden; }
.combo-text { flex: 1; padding: 4px 0 0 3px; font-size: 14px; color: #222; letter-spacing: .4px; }
.combo-btn { width: 27px; border-left: 1px solid #8f8d89; background: linear-gradient(#f4f3f2, #e3e2e0); display: flex; align-items: center; justify-content: center; }
.combo-ch { width: 10px; height: 7px; }
.persp { position: absolute; left: 880px; top: 8px; display: flex; align-items: center; gap: 6px; }
.persp-new { width: 15px; height: 15px; }
.persp-btn { width: 86px; height: 27px; display: flex; align-items: center; gap: 1px; padding-left: 5px; border: 1px solid #a6a39e; border-radius: 4px; background: #bfbcb7; color: #2a2a2a; }

/* workbench */
.workbench { height: 608px; flex: none; display: flex; gap: 3px; padding: 1px 0 0 7px; }
.col-left { width: 262px; display: flex; flex-direction: column; gap: 4px; }
.col-right { width: 745px; display: flex; flex-direction: column; gap: 3px; }
.panel { border: 1px solid #a5a3a0; border-radius: 9px 9px 0 0; background: #ecebe9; display: flex; flex-direction: column; min-height: 0; }
.explorer { height: 301px; }
.outline { height: 301px; }
.editor { height: 386px; }
.props { flex: 1; }
.tabhead { height: 30px; flex: none; display: flex; position: relative; border-bottom: 1px solid #a5a3a0; }
.tab { display: flex; align-items: center; height: 30px; padding-bottom: 2px; position: relative; color: #2e2e2e; white-space: nowrap; }
.tab.active { background: linear-gradient(#fff, #ecebe9); border-radius: 8px 0 0 0; padding-left: 4px; z-index: 1; }
.explorer .tab.active { width: 150px; }
.tab.short { width: 85px; padding-left: 5px; }
.tab.blue { width: 120px; padding-left: 5px; background: linear-gradient(#e6eef8, #b4cbe8); }
.tabcurve { position: absolute; left: 100%; top: 0; width: 40px; height: 30px; margin-left: -1px; }
.tabic { margin-right: 3px; }
.tabic2 { width: 14px; height: 14px; margin-right: 4px; }
.tabic3 { width: 12px; height: 15px; margin-right: 4px; }
.tabic4 { width: 15px; height: 15px; margin-right: 4px; }
.tabic5 { width: 14px; height: 12px; margin-right: 4px; }
.fileic2 { width: 12px; height: 15px; margin-right: 6px; }
.x { width: 11px; height: 11px; margin-left: 9px; position: relative; z-index: 1; }
.tab.plain { padding-left: 6px; }
.outline .tab.plain { margin-left: 33px; border-right: 1px solid #bcbab6; padding-left: 0; width: 78px; border-radius: 0 6px 0 0; }
.props .tab.plain { padding-left: 4px; width: 63px; border-right: 1px solid #bcbab6; }
.tab.prop { width: 110px; padding-left: 6px; }
.headbtns { position: absolute; right: 0; top: 0; height: 29px; display: flex; align-items: flex-start; }
.b-min { width: 11px; height: 6px; margin: 6px 8px 0 0; }
.b-max { width: 10px; height: 10px; margin: 6px 7px 0 0; }
.pinic { margin: 9px 12px 0 0; }
.headbtns .vmenu { margin: 5px 10px 0 0; position: static; }

.viewbar { height: 33px; flex: none; position: relative; display: flex; align-items: center; justify-content: flex-end; padding-right: 7px; }
.vb-ic { width: 14px; height: 14px; margin-right: 12px; }
.vb-link { margin-right: 8px; }
.vsep { width: 1px; height: 28px; background: #d2d0cd; margin-right: 12px; }
.vb-ic.dots { margin-right: 17px; }
.vmenu { width: 11px; height: 7px; }
.viewbar .vmenu { margin-bottom: 10px; }
.tree { flex: 1; margin: 0 2px; background: #fff; }
.row { height: 23px; display: flex; align-items: center; padding-left: 41px; color: #2e2e2e; }
.row span { margin-left: 4px; }
.row.sel { height: 24px; padding-left: 1px; background: linear-gradient(#7ea8d9, #6c97ca); color: #e8f1fb; }
.twist { width: 0; height: 0; border: 6px solid transparent; border-top: 6px solid #111; border-bottom: 0; margin-right: 7px; filter: drop-shadow(0 0 1px #fff); }
.row.sel span { margin-left: 3px; }
.fileic { width: 12px; height: 15px; }

.viewbar.ol { height: 34px; border-bottom: 1px solid #aeaca9; margin: 0 2px; padding-right: 5px; }
.outline-body { padding: 0 2px; flex: 1; }

/* editor */
.edtab { border-bottom: 0; }
.edbody { flex: 1; display: flex; min-height: 0; background: #fff; border: 2px solid #b4cbe8; }
.canvas { width: 613px; position: relative; z-index: 3; background-color: #fff; background-image: linear-gradient(#d2e1f3 1px, transparent 1px), linear-gradient(90deg, #d2e1f3 1px, transparent 1px), linear-gradient(#e6eff9 1px, transparent 1px), linear-gradient(90deg, #e6eff9 1px, transparent 1px); background-size: 50px 50px, 50px 50px, 10px 10px, 10px 10px; }
.conn { position: absolute; left: 0; top: 0; width: 613px; height: 350px; }
.start-ev { position: absolute; left: 90px; top: 140px; width: 36px; height: 36px; border-radius: 50%; border: 1px solid #7e98b8; background: linear-gradient(#f3f7fb, #d6e4f3); }
.shape { position: absolute; left: 200px; top: 80px; width: 150px; height: 150px; border: 1px solid #6e97c6; outline: 1px dashed #f5901e; outline-offset: 0; border-radius: 5px; background: linear-gradient(#7cb3e7, #a8cef1); display: flex; align-items: center; justify-content: center; padding-left: 3px; font: bold 11px "Liberation Sans", sans-serif; letter-spacing: .3px; color: #11151a; }
.h { position: absolute; width: 6px; height: 6px; background: #ff8a00; }
.tl, .tm, .tr { top: 77px; }
.ml, .mr { top: 152px; }
.bl, .bm, .br { top: 227px; }
.tl, .ml, .bl { left: 197px; }
.tm, .bm { left: 272px; }
.tr, .mr, .br { left: 347px; }
.pad1, .pad2 { position: absolute; background: #f3f7fa; border: 1px solid #d3dfe9; border-radius: 6px; }
.pad1 { left: 316px; top: 51px; width: 39px; height: 28px; display: flex; align-items: center; justify-content: center; padding-right: 2px; }
.trash { width: 12px; height: 14px; }
.pad2 { left: 352px; top: 75px; width: 27px; height: 60px; padding: 9px 0 0 3px; }
.padbtn { display: block; width: 19px; height: 20px; border: 1px solid #86a4c4; background: #dce9f5; }
.addp { width: 17px; height: 18px; }
.padflow { width: 14px; height: 6px; margin: 7px 0 0 3px; }
.cursor { position: absolute; left: 366px; top: 96px; width: 11px; height: 18px; }
.tooltip { position: absolute; left: 366px; top: 121px; width: 252px; height: 54px; border: 1px solid #000; background: #e4f1fb; color: #555; padding: 0 2px; display: flex; flex-direction: column; }
.tooltip b { color: #444; letter-spacing: .3px; }

/* palette */
.palette { flex: 1; min-width: 0; display: flex; flex-direction: column; border-left: 1px solid #b4b2ae; background: #fff; overflow: hidden; }
.pal-head { height: 24px; flex: none; display: flex; align-items: center; padding: 2px 0 0 4px; gap: 3px; background: linear-gradient(#f7f7f6, #ecebe9); border-bottom: 1px solid #c5c3c0; position: relative; }
.pal-ic { width: 15px; height: 15px; }
.pal-arrow { position: absolute; right: 11px; top: 6px; width: 6px; height: 12px; }
.pal-main { flex: 1; display: flex; min-height: 0; }
.pal-list { flex: 1; min-width: 0; overflow: hidden; }
.pal-group.tools { height: 53px; padding-top: 3px; }
.pal-item { display: flex; align-items: flex-start; position: relative; padding-left: 35px; color: #333; }
.pal-item.seltool { margin-left: 14px; width: 89px; height: 21px; padding: 1px 0 0 20px; background: #cfe1f7; border: 1px dotted #223; margin-bottom: 4px; }
.pal-item.seltool + .pal-item { padding: 1px 0 0 21px; margin-left: 14px; }
.pi-sel { position: absolute; left: 5px; top: 1px; width: 12px; height: 16px; }
.pi-mq { position: absolute; left: 3px; top: 3px; width: 14px; height: 14px; }
.pal-sec { border-top: 1px solid #b7b5b2; }
.pal-dr { height: 22px; display: flex; align-items: center; padding-left: 3px; background: #ecebe9; gap: 2px; position: relative; color: #333; }
.fly { position: absolute; right: 5px; top: 6px; width: 10px; height: 10px; }
.pal-item.two { line-height: 17px; padding-top: 5px; }
.pi-flow { position: absolute; left: 18px; top: 11px; width: 14px; height: 6px; }
.pi { position: absolute; left: 17px; top: 6px; }
.peek { height: 7px; margin: 8px 0 0 15px; width: 76px; background: #bdbbb8; position: relative; overflow: hidden; color: #8a8885; line-height: 14px; padding-left: 18px; }
.peek span { display: block; margin-top: -1px; }
.peek i { position: absolute; left: 33px; top: 0; width: 0; height: 0; border: 4px solid transparent; border-top: 4px solid #111; border-bottom: 0; }
.s1 { height: 77px; }
.s2 { height: 68px; }
.s3 { height: 77px; }
.s4 { height: 60px; }
.scroll { width: 15px; flex: none; margin-right: 1px; display: flex; flex-direction: column; background: #cfcdc9; border-left: 1px solid #b4b2ae; }
.sb-btn { height: 15px; flex: none; border: 1px solid #a9a7a4; border-radius: 3px; background: linear-gradient(#fafafa, #dedcda); display: flex; align-items: center; justify-content: center; }
.sb-btn .combo-ch { width: 7px; height: 5px; }
.sb-thumb { height: 227px; flex: none; background: linear-gradient(90deg, #82abde, #a7c5ea); border: 1px solid #7ea0cd; position: relative; }
.sb-thumb i { position: absolute; left: 3px; top: 110px; width: 7px; height: 6px; border-top: 2px solid #6a8dbb; border-bottom: 2px solid #6a8dbb; }
.sb-track { flex: 1; }

/* properties */
.propbody { flex: 1; margin: 2px 2px 1px 1px; background: #fff; display: flex; flex-direction: column; min-height: 0; }
.formhead { height: 29px; flex: none; display: flex; align-items: center; gap: 4px; padding: 1px 0 0 6px; background: linear-gradient(#fff, #e5ecf6); border-bottom: 1px solid #c5d5ea; font-weight: bold; font-size: 16px; color: #4f627f; }
.split { flex: 1; display: flex; min-height: 0; }
.sections { width: 166px; flex: none; background: #ecebe9; border-right: 1px solid #9d9b98; padding-top: 12px; }
.stab { height: 24px; padding: 1px 0 0 8px; background: linear-gradient(#dadddf, #b9bdc1); border-bottom: 1px solid #8f9296; color: #333; margin-right: -1px; }
.stab.on { padding-top: 2px; background: #fff; font-weight: bold; color: #111; border: 0; position: relative; }
.formarea { flex: 1; padding: 10px 0 0 10px; }
.fsec { width: 553px; height: 23px; display: flex; align-items: center; gap: 5px; padding-left: 7px; border-top: 1px solid #c2d3ea; border-radius: 3px 3px 0 0; background: linear-gradient(#e7eef8, #fff); font-weight: bold; color: #53657f; letter-spacing: .25px; }
.frow { display: flex; align-items: center; height: 26px; }
.fsec + .frow { margin-top: 6px; }
.frow label { width: 50px; text-align: right; margin-right: 4px; color: #333; }
.field { width: 490px; height: 25px; padding: 3px 0 0 2px; border: 1px solid #c8c8c8; color: #333; }
.fsec.doc { margin-top: 12px; padding-left: 13px; gap: 9px; letter-spacing: .3px; }
.tw-down { width: 0; height: 0; border: 4px solid transparent; border-top: 4px solid #53657f; border-bottom: 0; }
.tw-right { width: 0; height: 0; border: 4px solid transparent; border-left: 4px solid #53657f; border-right: 0; }

/* status */
.status { flex: 1; display: flex; align-items: flex-start; padding: 3px 0 0 11px; }
.status .handle { margin: 0; height: 28px; }
.stat-ic { margin: 6px 0 0 11px; width: 14px; }
.status .far { margin-left: 661px; }
```
